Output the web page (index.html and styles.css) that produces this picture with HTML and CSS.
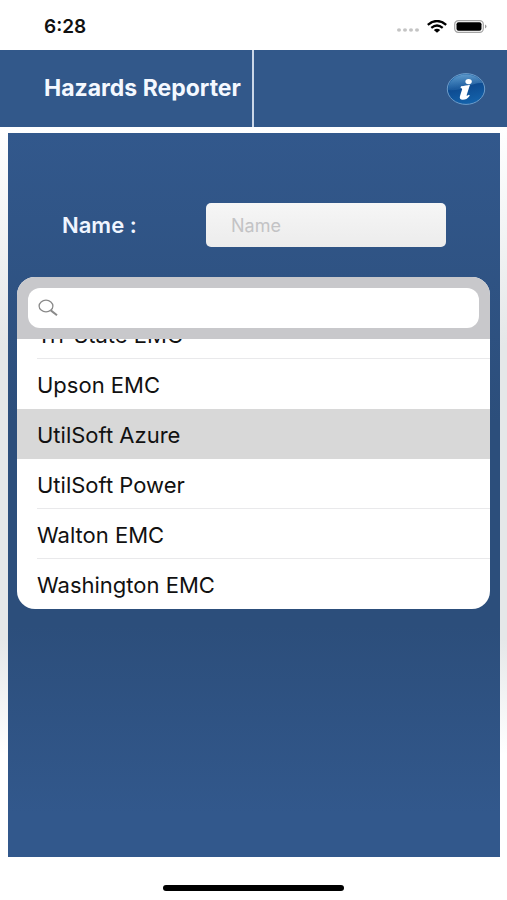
FILE: index.html
```html
<!DOCTYPE html>
<html lang="en">
<head>
<meta charset="utf-8">
<meta name="viewport" content="width=device-width, initial-scale=1">
<title>Hazards Reporter</title>
<link rel="stylesheet" href="styles.css">
</head>
<body>
<div class="status">
  <span class="time">6:28</span>
  <div class="indicators">
    <svg class="cell" width="24" height="6" viewBox="0 0 24 6" fill="#c4c4c4" aria-hidden="true"><ellipse cx="3" cy="3" rx="2" ry="1.7"/><ellipse cx="9" cy="3" rx="2" ry="1.7"/><ellipse cx="15" cy="3" rx="2" ry="1.7"/><ellipse cx="21" cy="3" rx="2" ry="1.7"/></svg>
    <svg width="20" height="13" viewBox="0 0 20 13" fill="none" stroke="#000" stroke-width="2.3" aria-hidden="true"><path d="M.8 4.8Q10-2.8 19.2 4.8"/><path d="M4.3 7.8Q10 3.2 15.7 7.8"/><path d="M6.8 10Q10 7.4 13.2 10L10 12.8Z" fill="#000" stroke="none"/></svg>
    <svg width="33" height="14" viewBox="0 0 33 14" aria-hidden="true"><rect x=".7" y=".7" width="28.6" height="11.6" rx="3.6" fill="#fff" stroke="#a4a4a4" stroke-width="1.2"/><rect x="2.5" y="2.3" width="25" height="8.4" rx="2" fill="#000"/><path d="M31 4.6q1.5.6 1.5 1.9T31 8.4Z" fill="#999"/></svg>
  </div>
</div>
<header class="bar">
  <h1 class="title">Hazards Reporter</h1>
  <div class="actions">
    <button class="info" type="button" aria-label="Information">
      <svg width="40" height="34" viewBox="0 0 40 34" aria-hidden="true">
        <defs>
          <linearGradient id="ball" x1="0" y1="0" x2=".3" y2="1"><stop offset="0" stop-color="#2d78b8"/><stop offset=".5" stop-color="#0d4a90"/><stop offset="1" stop-color="#1360a8"/></linearGradient>
          <linearGradient id="shine" x1="0" y1="0" x2="0" y2="1"><stop offset="0" stop-color="#8fc0e4" stop-opacity=".55"/><stop offset="1" stop-color="#4c94cc" stop-opacity=".2"/></linearGradient>
        </defs>
        <ellipse cx="20" cy="17" rx="18.7" ry="15.4" fill="url(#ball)" stroke="#6d9cc9" stroke-width="1"/>
        <path d="M2.2 18C1.8 9 10 2.4 20 2.4c8 0 14 3.5 16.5 8.6C25 10 15 20 2.2 18Z" fill="url(#shine)"/>
        <ellipse cx="22.6" cy="9.600" rx="3.200" ry="2.600" fill="#fff"/>
        <path d="M15 14.200c3.400-.3 6-.8 9-1.400l-3.300 10.200c-.4 1.300.6 1.100 2-.3l1.200.8c-2.200 3.300-4.600 4.300-7.100 4.300-2.600 0-3.500-1.600-2.800-3.800l2-6.200c.4-1.300-.1-1.700-1.500-1.800Z" fill="#fff"/>
      </svg>
    </button>
  </div>
</header>
<main class="page">
  <section class="panel">
    <div class="field">
      <label class="label" for="name">Name :</label>
      <input class="name" id="name" type="text" placeholder="Name">
    </div>
    <div class="picker">
      <div class="searchbar">
        <label class="search">
          <svg width="21" height="18" viewBox="0 0 21 18" fill="none" stroke="#8a8a8a" aria-hidden="true"><ellipse cx="8" cy="7" rx="6.900" ry="5.800" stroke-width="1.300"/><path d="M12.800 11.400l6.200 4.800" stroke-width="2"/></svg>
          <input class="query" type="search" aria-label="Search companies">
        </label>
      </div>
      <ul class="list">
        <li class="row partial"><button type="button">Tri-State EMC</button></li>
        <li class="row before-selected"><button type="button">Upson EMC</button></li>
        <li class="row selected"><button type="button">UtilSoft Azure</button></li>
        <li class="row"><button type="button">UtilSoft Power</button></li>
        <li class="row"><button type="button">Walton EMC</button></li>
        <li class="row"><button type="button">Washington EMC</button></li>
      </ul>
    </div>
  </section>
</main>
<footer class="home"><div class="indicator"></div></footer>
</body>
</html>
```
FILE: styles.css
```css
* { box-sizing: border-box; }
body {
  margin: 0;
  min-height: 100vh;
  display: flex;
  flex-direction: column;
  background: #fff;
  color: #111;
  font-family: Inter, "Liberation Sans", sans-serif;
}
button { border: 0; padding: 0; background: none; font: inherit; color: inherit; text-align: left; }
input { border: 0; outline: 0; font: inherit; min-width: 0; }
.status {
  height: 50px;
  padding: 3px 20px 0 44px;
  display: flex;
  align-items: center;
  justify-content: space-between;
}
.time { font-size: 19px; font-weight: 600; }
.indicators { display: flex; align-items: center; gap: 7px; }
.cell { margin-top: 7px; }
.bar {
  height: 77px;
  display: grid;
  grid-template-columns: 1fr 1fr;
  background: #32588a;
  color: #f4f8ff;
}
.title {
  margin: 0;
  padding-left: 44px;
  border-right: 2px solid #cbd7e8;
  font-size: 23px;
  font-weight: 700;
  line-height: 77px;
  white-space: nowrap;
}
.actions { display: flex; align-items: center; justify-content: flex-end; padding-right: 21px; }
.info, .info svg { display: block; }
.page {
  flex: 1;
  display: flex;
  padding: 6px 7px 0 8px;
  background: linear-gradient(#fff, #e5e7e8 30%, #e5e7e8 70%, #fff 86%);
}
.panel {
  flex: 1;
  padding: 70px 10px 20px 9px;
  background: linear-gradient(#32588c, #2c4e7b 40%, #2c4e7b 68%, #32588c 94%);
}
.field {
  display: grid;
  grid-template-columns: 144px 1fr;
  align-items: center;
  padding: 0 44px 0 45px;
}
.label { color: #f0f5ff; font-size: 22px; font-weight: 600; }
.name {
  width: 100%;
  height: 44px;
  padding: 0 25px;
  border-radius: 5px;
  background: linear-gradient(#f6f6f6, #ececec);
  font-size: 18px;
}
.name::placeholder { color: #c3c3c5; opacity: 1; }
.picker { margin-top: 30px; border-radius: 18px; overflow: hidden; background: #fff; }
.searchbar { padding: 11px; background: #c8c8cb; }
.search {
  height: 40px;
  display: flex;
  align-items: center;
  gap: 8px;
  padding: 0 10px;
  border-radius: 12px;
  background: #fff;
}
.query { flex: 1; font-size: 20px; background: none; }
.list { margin: 0; padding: 0; list-style: none; }
.row { height: 50px; padding-left: 20px; }
.row button {
  display: block;
  width: 100%;
  height: 50px;
  padding-top: 2px;
  border-bottom: 1px solid #e9e9eb;
  font-size: 22px;
}
.partial { height: 20px; display: flex; align-items: flex-end; overflow: hidden; }
.partial button { flex-shrink: 0; }
.selected { background: #d8d8d8; }
.before-selected button, .selected button, .row:last-child button { border-color: transparent; }
.home { height: 43px; display: flex; justify-content: center; align-items: flex-end; padding-bottom: 9px; }
.indicator { width: 181px; height: 6px; border-radius: 3px; background: #000; }
```
